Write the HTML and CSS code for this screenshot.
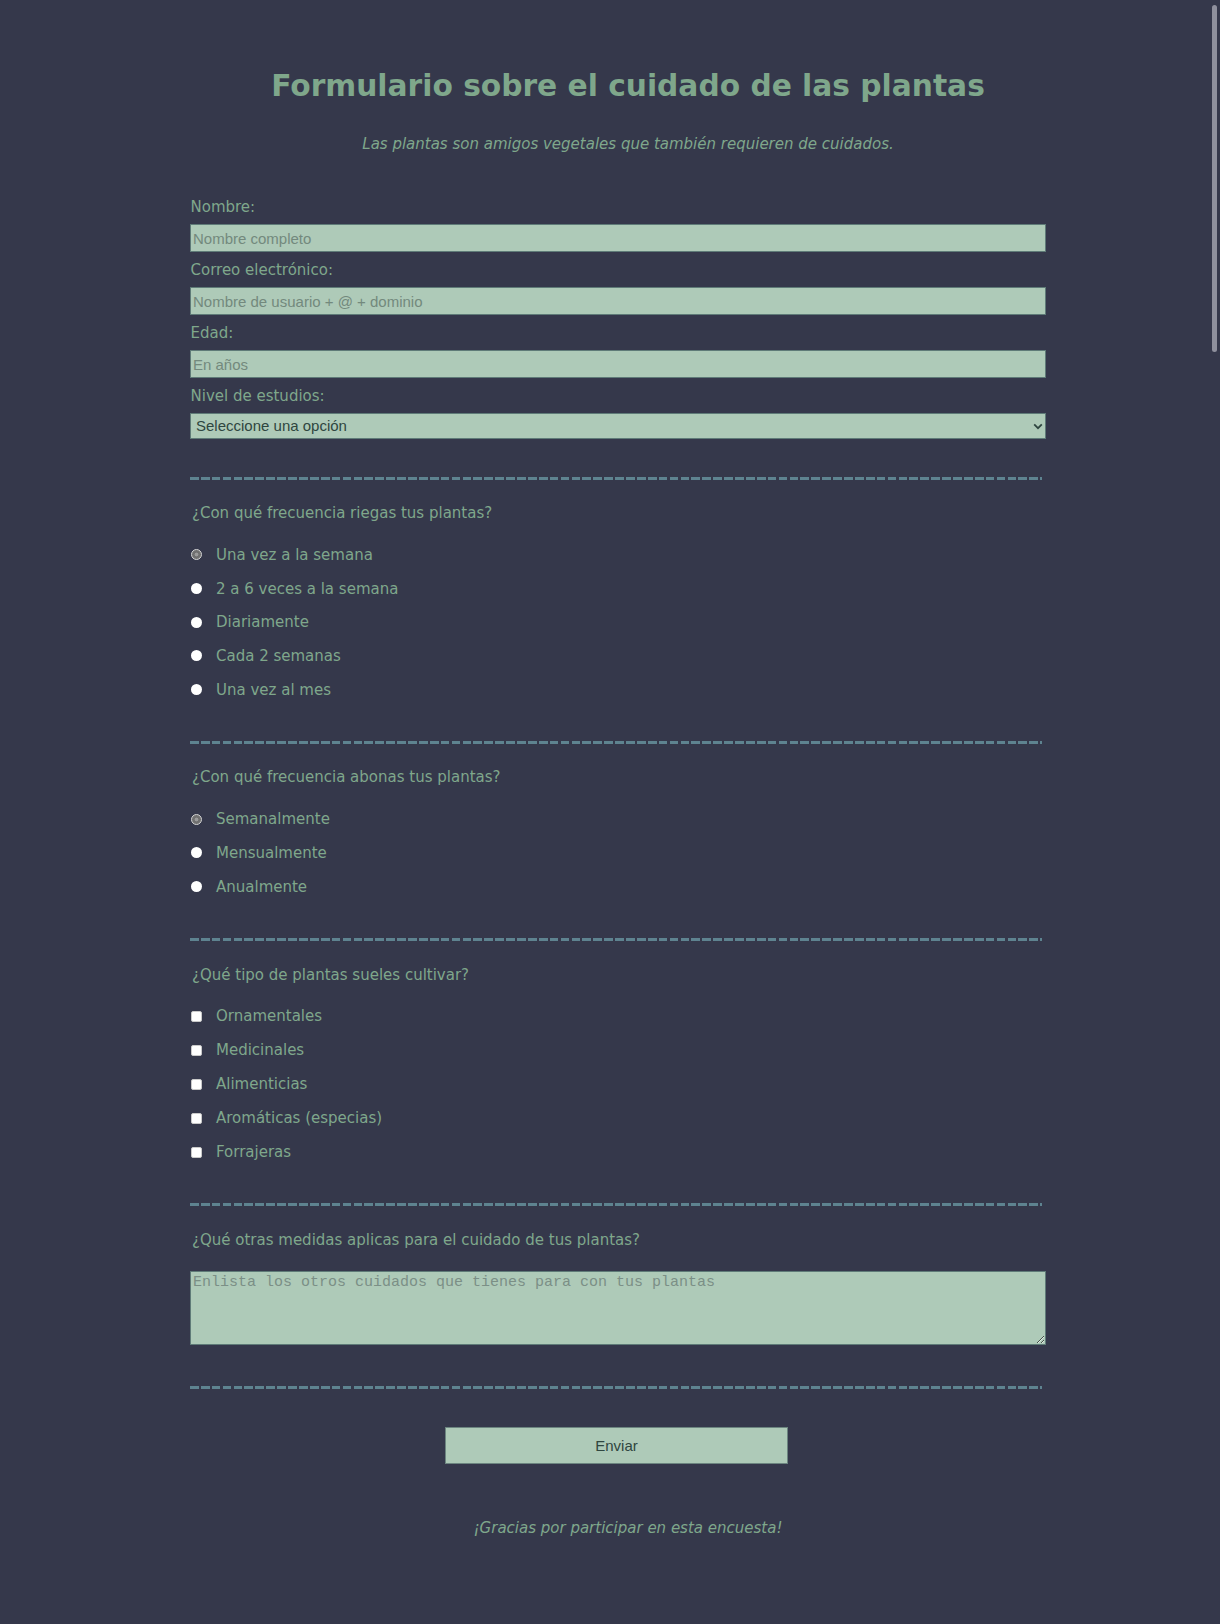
FILE: index.html
```html
<!DOCTYPE html>
<html lang="es">
<head>
<meta charset="utf-8">
<title>Formulario sobre el cuidado de las plantas</title>
<link rel="stylesheet" href="styles.css">
</head>
<body>
<div class="page">
  <header class="header">
    <h1 class="title">Formulario sobre el cuidado de las plantas</h1>
    <p class="subtitle">Las plantas son amigos vegetales que también requieren de cuidados.</p>
  </header>

  <form class="survey">
    <div class="field">
      <label class="field-label" for="nombre">Nombre:</label>
      <input class="text-input" id="nombre" type="text" placeholder="Nombre completo">
    </div>
    <div class="field">
      <label class="field-label" for="correo">Correo electrónico:</label>
      <input class="text-input" id="correo" type="email" placeholder="Nombre de usuario + @ + dominio">
    </div>
    <div class="field">
      <label class="field-label" for="edad">Edad:</label>
      <input class="text-input" id="edad" type="number" placeholder="En años">
    </div>
    <div class="field">
      <label class="field-label" for="estudios">Nivel de estudios:</label>
      <div class="select-wrap">
        <select class="select-input" id="estudios">
          <option>Seleccione una opción</option>
          <option>Primaria</option>
          <option>Secundaria</option>
          <option>Universidad</option>
        </select>
        <svg class="select-arrow" width="10" height="7" viewBox="0 0 10 7"><path d="M1.2 1.4 L5 5.2 L8.8 1.4" fill="none" stroke="#2f4640" stroke-width="1.8"/></svg>
      </div>
    </div>

    <div class="divider"></div>

    <div class="group">
      <p class="question">¿Con qué frecuencia riegas tus plantas?</p>
      <label class="option"><input class="radio" type="radio" name="riego" checked><span>Una vez a la semana</span></label>
      <label class="option"><input class="radio" type="radio" name="riego"><span>2 a 6 veces a la semana</span></label>
      <label class="option"><input class="radio" type="radio" name="riego"><span>Diariamente</span></label>
      <label class="option"><input class="radio" type="radio" name="riego"><span>Cada 2 semanas</span></label>
      <label class="option"><input class="radio" type="radio" name="riego"><span>Una vez al mes</span></label>
    </div>

    <div class="divider"></div>

    <div class="group">
      <p class="question">¿Con qué frecuencia abonas tus plantas?</p>
      <label class="option"><input class="radio" type="radio" name="abono" checked><span>Semanalmente</span></label>
      <label class="option"><input class="radio" type="radio" name="abono"><span>Mensualmente</span></label>
      <label class="option"><input class="radio" type="radio" name="abono"><span>Anualmente</span></label>
    </div>

    <div class="divider"></div>

    <div class="group group-checks">
      <p class="question">¿Qué tipo de plantas sueles cultivar?</p>
      <label class="option"><input class="check" type="checkbox"><span>Ornamentales</span></label>
      <label class="option"><input class="check" type="checkbox"><span>Medicinales</span></label>
      <label class="option"><input class="check" type="checkbox"><span>Alimenticias</span></label>
      <label class="option"><input class="check" type="checkbox"><span>Aromáticas (especias)</span></label>
      <label class="option"><input class="check" type="checkbox"><span>Forrajeras</span></label>
    </div>

    <div class="divider"></div>

    <div class="group group-text">
      <p class="question">¿Qué otras medidas aplicas para el cuidado de tus plantas?</p>
      <textarea class="notes" placeholder="Enlista los otros cuidados que tienes para con tus plantas"></textarea>
    </div>

    <div class="divider divider-last"></div>

    <button class="submit" type="submit">Enviar</button>
  </form>

  <p class="thanks">¡Gracias por participar en esta encuesta!</p>
</div>
<div class="scroll-thumb" aria-hidden="true"></div>
</body>
</html>
```

FILE: styles.css
```css
html {
  background: #35384b;
}

body {
  margin: 0;
  padding-bottom: 60px;
  background: #35384b;
  color: #7fa78b;
  font-family: "DejaVu Sans", Verdana, sans-serif;
  font-size: 15px;
  line-height: 18px;
}

.page {
  width: 876px;
  margin-left: 190px;
}

.scroll-thumb {
  position: fixed;
  top: 5px;
  right: 3px;
  width: 5px;
  height: 347px;
  border-radius: 3px;
  background: #8f909d;
}

.header {
  padding-top: 68px;
  text-align: center;
}

.title {
  margin: 0;
  font-size: 29.7px;
  line-height: 36px;
  font-weight: bold;
  color: #7fa78b;
}

.subtitle {
  margin: 31px 0 0;
  font-style: italic;
}

.survey {
  width: 856px;
  margin-top: 44.5px;
}

.field-label {
  display: block;
  padding-left: 0.5px;
}

.text-input,
.select-input,
.notes {
  display: block;
  width: 100%;
  box-sizing: border-box;
  margin: 0;
  background: #aecab8;
  border: 1px solid #5f7b78;
  font-family: "Liberation Sans", Arial, sans-serif;
  font-size: 15px;
  color: #2f4640;
  outline: none;
}

.text-input {
  height: 28px;
  margin-top: 8.5px;
  margin-bottom: 8.5px;
  padding: 0 2px;
}

.text-input::placeholder {
  color: #73897d;
}

.select-wrap {
  position: relative;
  margin-top: 8px;
}

.select-input {
  appearance: none;
  -webkit-appearance: none;
  height: 26.5px;
  padding: 0 5px;
  border-radius: 0;
}

.select-arrow {
  position: absolute;
  right: 3px;
  top: 10px;
}

.divider {
  width: 852px;
  height: 3px;
  margin-top: 37.5px;
  background: repeating-linear-gradient(to right, #5e8390 0 8.7px, transparent 8.7px 10.9px);
}

.group + .divider {
  margin-top: 34.5px;
}

.group + .divider-last {
  margin-top: 41px;
}

.question {
  margin: 24.5px 0 0;
  padding-left: 2px;
}

.group .question {
  margin-bottom: 16px;
}

.group-text .question {
  margin-bottom: 0;
}

.option {
  display: flex;
  align-items: center;
  gap: 14px;
  height: 33.7px;
  padding-left: 1px;
}

.group-checks .option {
  height: 33.9px;
}

.radio,
.check {
  appearance: none;
  -webkit-appearance: none;
  flex: none;
  margin: 0;
  width: 11px;
  height: 11px;
  background: #ffffff;
}

.radio {
  border-radius: 50%;
}

.radio:checked {
  box-sizing: border-box;
  border: 1.5px solid #d6d6d6;
  background: radial-gradient(circle, #9a9a9a 0 1.6px, #707070 2.2px);
}

.check {
  box-sizing: border-box;
  border: 1px solid #c9c9c9;
  border-radius: 2px;
}

.notes {
  height: 74px;
  margin-top: 22px;
  padding: 2px 2px;
  font-family: "Liberation Mono", "Courier New", monospace;
  font-size: 15px;
  line-height: 18px;
  resize: both;
}

.notes::placeholder {
  color: #7b8f86;
}

.submit {
  display: block;
  width: 343px;
  height: 37px;
  margin: 38.5px 0 0 255px;
  background: #aecab8;
  border: 1px solid #6c8580;
  font-family: "Liberation Sans", Arial, sans-serif;
  font-size: 15px;
  color: #2f4640;
  padding: 0;
}

.thanks {
  margin: 55px 0 0;
  text-align: center;
  font-style: italic;
}
```
